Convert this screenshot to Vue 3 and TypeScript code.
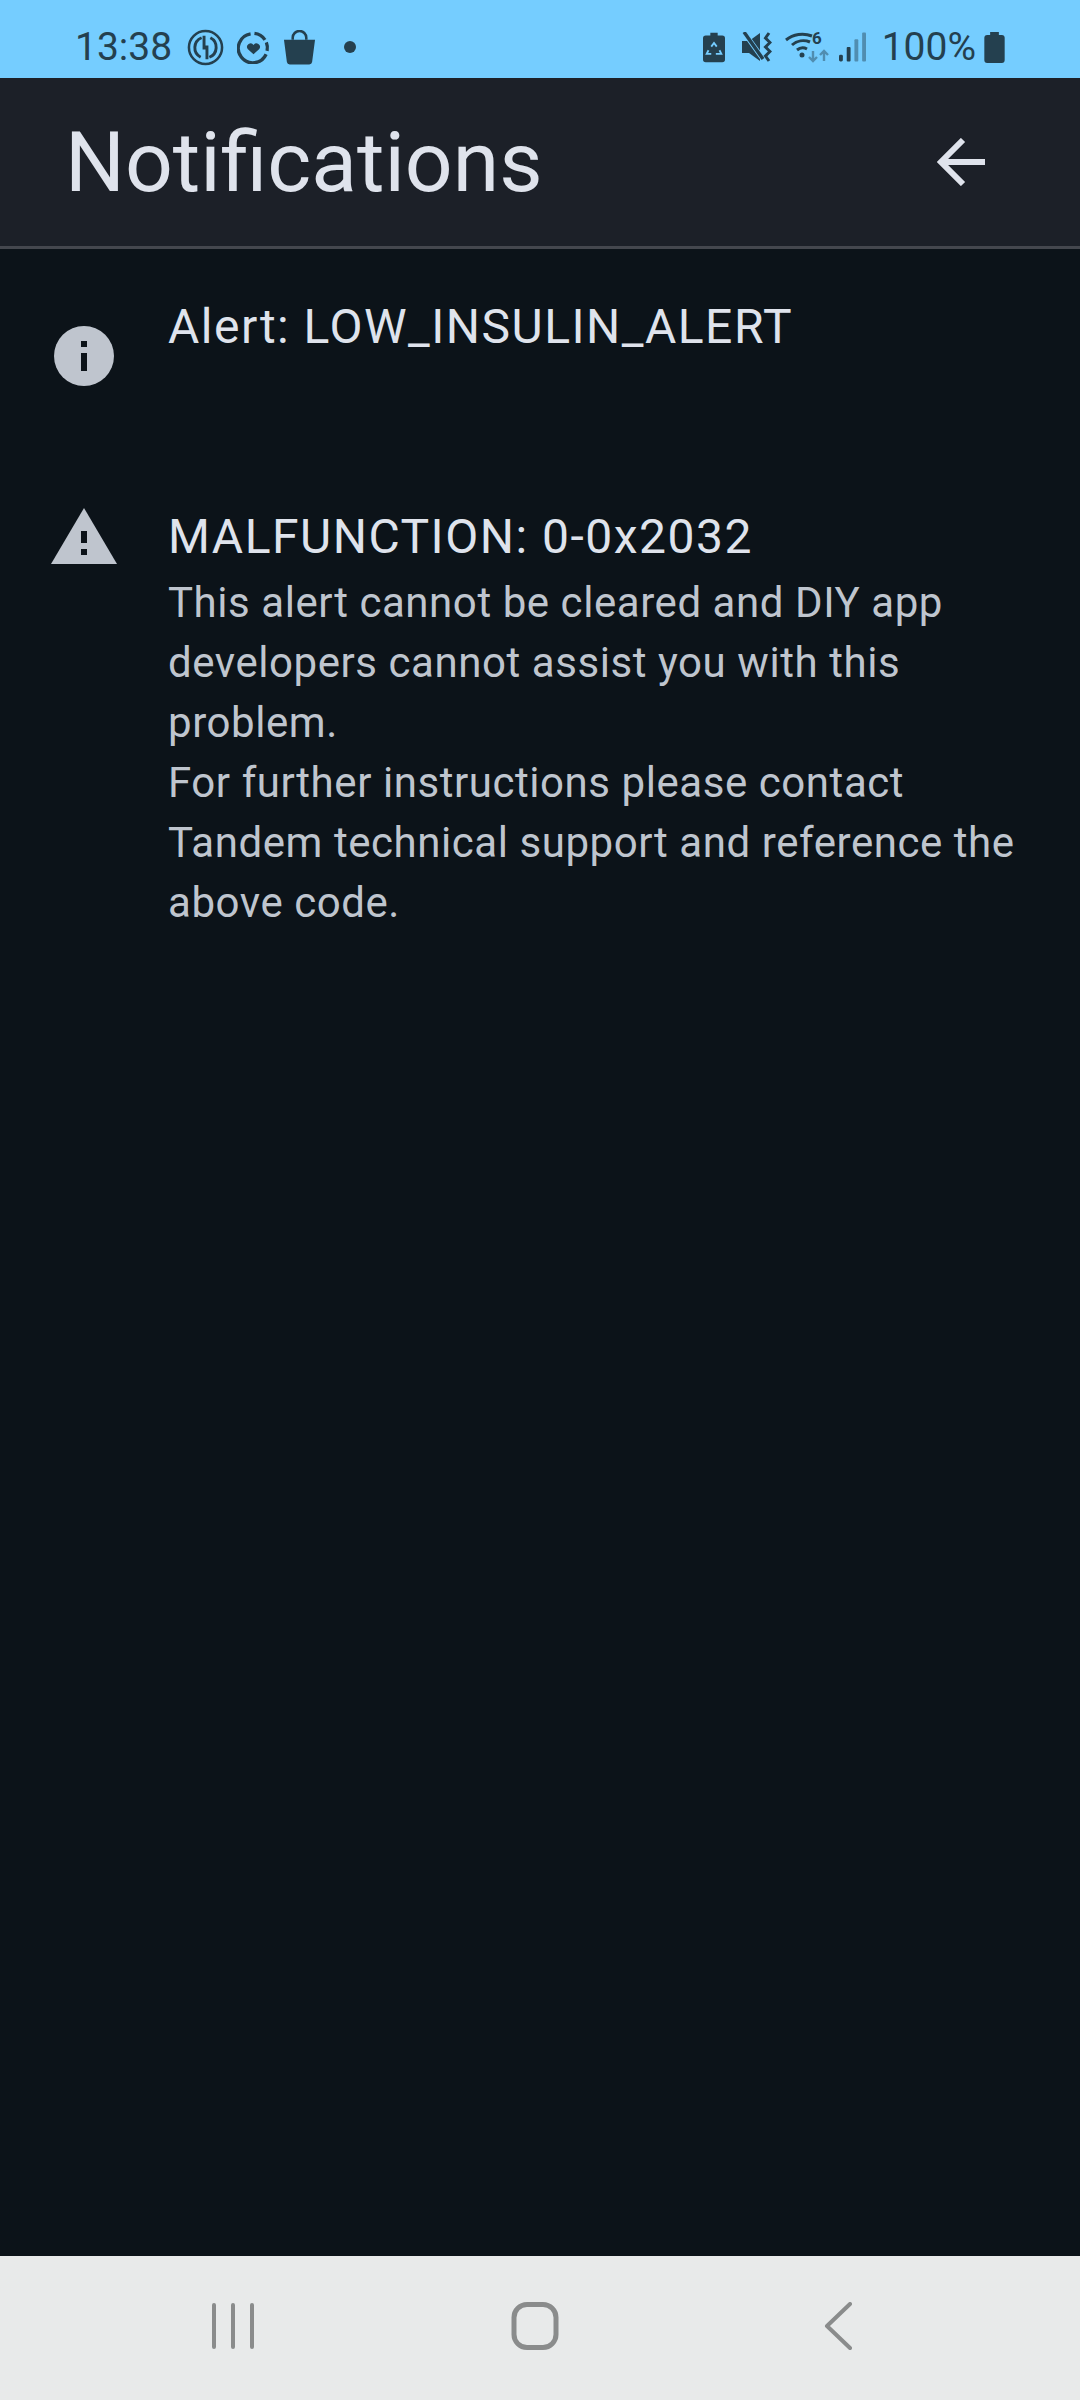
<script setup lang="ts">
interface Notice {
  kind: "info" | "warning";
  title: string;
  lines?: string[];
}

const notices: Notice[] = [
  { kind: "info", title: "Alert: LOW_INSULIN_ALERT" },
  {
    kind: "warning",
    title: "MALFUNCTION: 0-0x2032",
    lines: [
      "This alert cannot be cleared and DIY app developers cannot assist you with this problem.",
      "For further instructions please contact Tandem technical support and reference the above code.",
    ],
  },
];
</script>

<template>
  <div class="screen">
    <div class="status">
      <div class="status-left">
        <span class="time">13:38</span>
        <svg class="ic" width="37" height="37" viewBox="0 0 38 38" fill="none" stroke="#24404f">
          <circle cx="19" cy="19" r="17" stroke-width="2.6" />
          <path d="M15 9a11 11 0 0 0-1 20M23 29a11 11 0 0 0 1-20" stroke-width="3" />
          <path d="M17.500 7v14M20.500 31V17" stroke-width="3" />
        </svg>
        <svg class="ic" width="33" height="33" viewBox="0 0 34 34" fill="none" stroke="#24404f">
          <path d="M14 3a15 15 0 1 0 16 21" stroke-width="3.4" />
          <path d="M18 2.500a15 15 0 0 1 13 18" stroke-width="3.4" stroke-dasharray="13 3" />
          <path d="M17 24l-6-5.500a3.500 3.500 0 0 1 6-4 3.500 3.500 0 0 1 6 4z" fill="#24404f" stroke="none" />
        </svg>
        <svg class="ic" width="33" height="35" viewBox="0 0 34 36" fill="none">
          <path d="M10 10V8a7 7 0 0 1 14 0v2" stroke="#24404f" stroke-width="2.6" />
          <path d="M1 10h32l-3 23a3 3 0 0 1-3 2.500H7a3 3 0 0 1-3-2.500z" fill="#24404f" />
        </svg>
        <span class="dot"></span>
      </div>
      <div class="status-right">
        <svg class="ic" width="22" height="31" viewBox="0 0 24 32" fill="none">
          <path d="M8 0h8v3h5a3 3 0 0 1 3 3v23a3 3 0 0 1-3 3H3a3 3 0 0 1-3-3V6a3 3 0 0 1 3-3h5z" fill="#24404f" />
          <path d="M9 15l3-4 3 4M18 19l2 4h-6M6 19l-2 4h5" stroke="#75cdff" stroke-width="2" />
        </svg>
        <svg class="ic sound" width="30" height="30" viewBox="0 0 30 30" fill="none">
          <path d="M0 9h7l11-8v28L7 21H0z" fill="#24404f" />
          <path d="M1 -1l20 28" stroke="#75cdff" stroke-width="5" />
          <path d="M2 0l19 27" stroke="#24404f" stroke-width="3.400" />
          <path d="M27 1l-3.500 5 4.500 4.500-4.500 4.500 4.500 4.500-4.500 4.500 3.500 5" stroke="#24404f" stroke-width="3" />
        </svg>
        <svg class="ic wifi" width="43" height="32" viewBox="0 0 43 32" fill="none">
          <path d="M0 9a26 26 0 0 1 26-4M6 14a17 17 0 0 1 18-3M11 19a9 9 0 0 1 10-1" stroke="#24404f" stroke-width="3" />
          <circle cx="16" cy="24" r="2.500" fill="#24404f" />
          <text x="26" y="13" class="wifi-six">6</text>
          <path d="M27 20v10M23 26l4 4 4-4M38 30V20M34 24l4-4 4 4" stroke="#24404f" stroke-opacity="0.45" stroke-width="2.400" />
        </svg>
        <svg class="ic signal" width="27" height="30" viewBox="0 0 28 30">
          <rect x="0" y="23" width="4" height="7" rx="1.500" fill="#24404f" />
          <rect x="8" y="15" width="4" height="15" rx="1" fill="#24404f" />
          <rect x="16" y="7" width="4" height="23" rx="1" fill="#24404f" fill-opacity="0.45" />
          <rect x="24" y="0" width="4" height="30" rx="1" fill="#24404f" fill-opacity="0.45" />
        </svg>
        <span class="percent">100%</span>
        <svg class="ic battery" width="21" height="31" viewBox="0 0 21 32">
          <path d="M6 0h9v3h3a3 3 0 0 1 3 3v23a3 3 0 0 1-3 3H3a3 3 0 0 1-3-3V6a3 3 0 0 1 3-3h3z" fill="#24404f" />
        </svg>
      </div>
    </div>

    <header class="bar">
      <h1>Notifications</h1>
      <svg class="back" width="49" height="48" viewBox="0 0 49 48" fill="none" stroke="#dfe3ec" stroke-width="6">
        <path d="M49 24H4M27 2L5 24l22 22" />
      </svg>
    </header>

    <main class="list">
      <div v-for="n in notices" :key="n.title" class="row" :class="n.kind">
        <div class="icon">
          <svg v-if="n.kind === 'info'" width="60" height="60" viewBox="0 0 60 60">
            <circle cx="30" cy="30" r="30" fill="#bfc5ce" />
            <path d="M27 15h6v6h-6zM27 27h6v18h-6z" fill="#0c1319" />
          </svg>
          <svg v-else width="66" height="57" viewBox="0 0 66 57">
            <path d="M33 0l33 56H0z" fill="#bfc5ce" />
            <path d="M30 23h6v12h-6zM30 41h6v6h-6z" fill="#0c1319" />
          </svg>
        </div>
        <div class="text">
          <div class="title">{{ n.title }}</div>
          <div v-for="line in n.lines" :key="line" class="body">{{ line }}</div>
        </div>
      </div>
    </main>

    <nav class="nav">
      <svg class="recents" width="46" height="46" viewBox="0 0 46 46" fill="none" stroke="#8a8c8c" stroke-width="4" stroke-linecap="round">
        <path d="M4 2v42M23 2v42M42 2v42" />
      </svg>
      <svg class="home" width="48" height="48" viewBox="0 0 48 48" fill="none" stroke="#8a8c8c" stroke-width="5">
        <rect x="3" y="2.500" width="42" height="43" rx="13" />
      </svg>
      <svg class="prev" width="30" height="48" viewBox="0 0 30 48" fill="none" stroke="#8a8c8c" stroke-width="4" stroke-linecap="round" stroke-linejoin="round">
        <path d="M26 2L3 24l23 22" />
      </svg>
    </nav>
  </div>
</template>

<style>
html,
body {
  margin: 0;
  background: #0c1319;
}
</style>

<style scoped>
.screen {
  width: 1080px;
  height: 2400px;
  display: flex;
  flex-direction: column;
  background: #0c1319;
  font-family: Roboto, "Liberation Sans", sans-serif;
}
.status {
  height: 78px;
  flex: none;
  box-sizing: border-box;
  padding: 16px 75px 0 75px;
  display: flex;
  align-items: center;
  justify-content: space-between;
  background: #75cdff;
  color: #24404f;
}
.status-left,
.status-right {
  display: flex;
  align-items: center;
}
.time {
  font-size: 39px;
  margin-right: 15px;
}
.status-left .ic {
  margin-right: 13px;
}
.dot {
  width: 12px;
  height: 12px;
  margin-left: 15px;
  border-radius: 50%;
  background: #24404f;
}
.sound {
  margin-left: 17px;
}
.wifi {
  margin-left: 14px;
  overflow: visible;
}
.wifi-six {
  font-size: 17px;
  font-weight: 700;
  fill: #24404f;
}
.signal {
  margin-left: 10px;
}
.percent {
  font-size: 39px;
  margin-left: 16px;
}
.battery {
  margin-left: 8px;
}
.bar {
  height: 171px;
  flex: none;
  box-sizing: border-box;
  padding: 0 95px 0 65px;
  display: flex;
  align-items: center;
  justify-content: space-between;
  background: #1c2028;
  border-bottom: 3px solid #44474e;
}
h1 {
  margin: 0;
  font-size: 84px;
  font-weight: 400;
  color: #dfe3ec;
}
.list {
  flex: 1;
}
.row {
  display: flex;
  padding-left: 51px;
}
.row.info {
  padding-top: 48px;
  height: 174px;
}
.row.warning {
  padding-top: 36px;
}
.icon {
  width: 117px;
  flex: none;
}
.info .icon {
  padding: 29px 0 0 3px;
  box-sizing: border-box;
}
.warning .icon {
  padding-top: 1px;
}
.text {
  width: 860px;
}
.title {
  font-size: 48px;
  line-height: 60px;
  letter-spacing: 1.5px;
  color: #dfe3ec;
  margin-bottom: 6px;
}
.body {
  font-size: 42px;
  line-height: 60px;
  letter-spacing: 0.56px;
  color: #bfc5ce;
}
.nav {
  height: 144px;
  flex: none;
  box-sizing: border-box;
  padding: 0 0 4px 210px;
  display: flex;
  align-items: center;
  background: #e8eaea;
}
.home {
  margin-left: 255px;
}
.prev {
  margin-left: 265px;
}
</style>
